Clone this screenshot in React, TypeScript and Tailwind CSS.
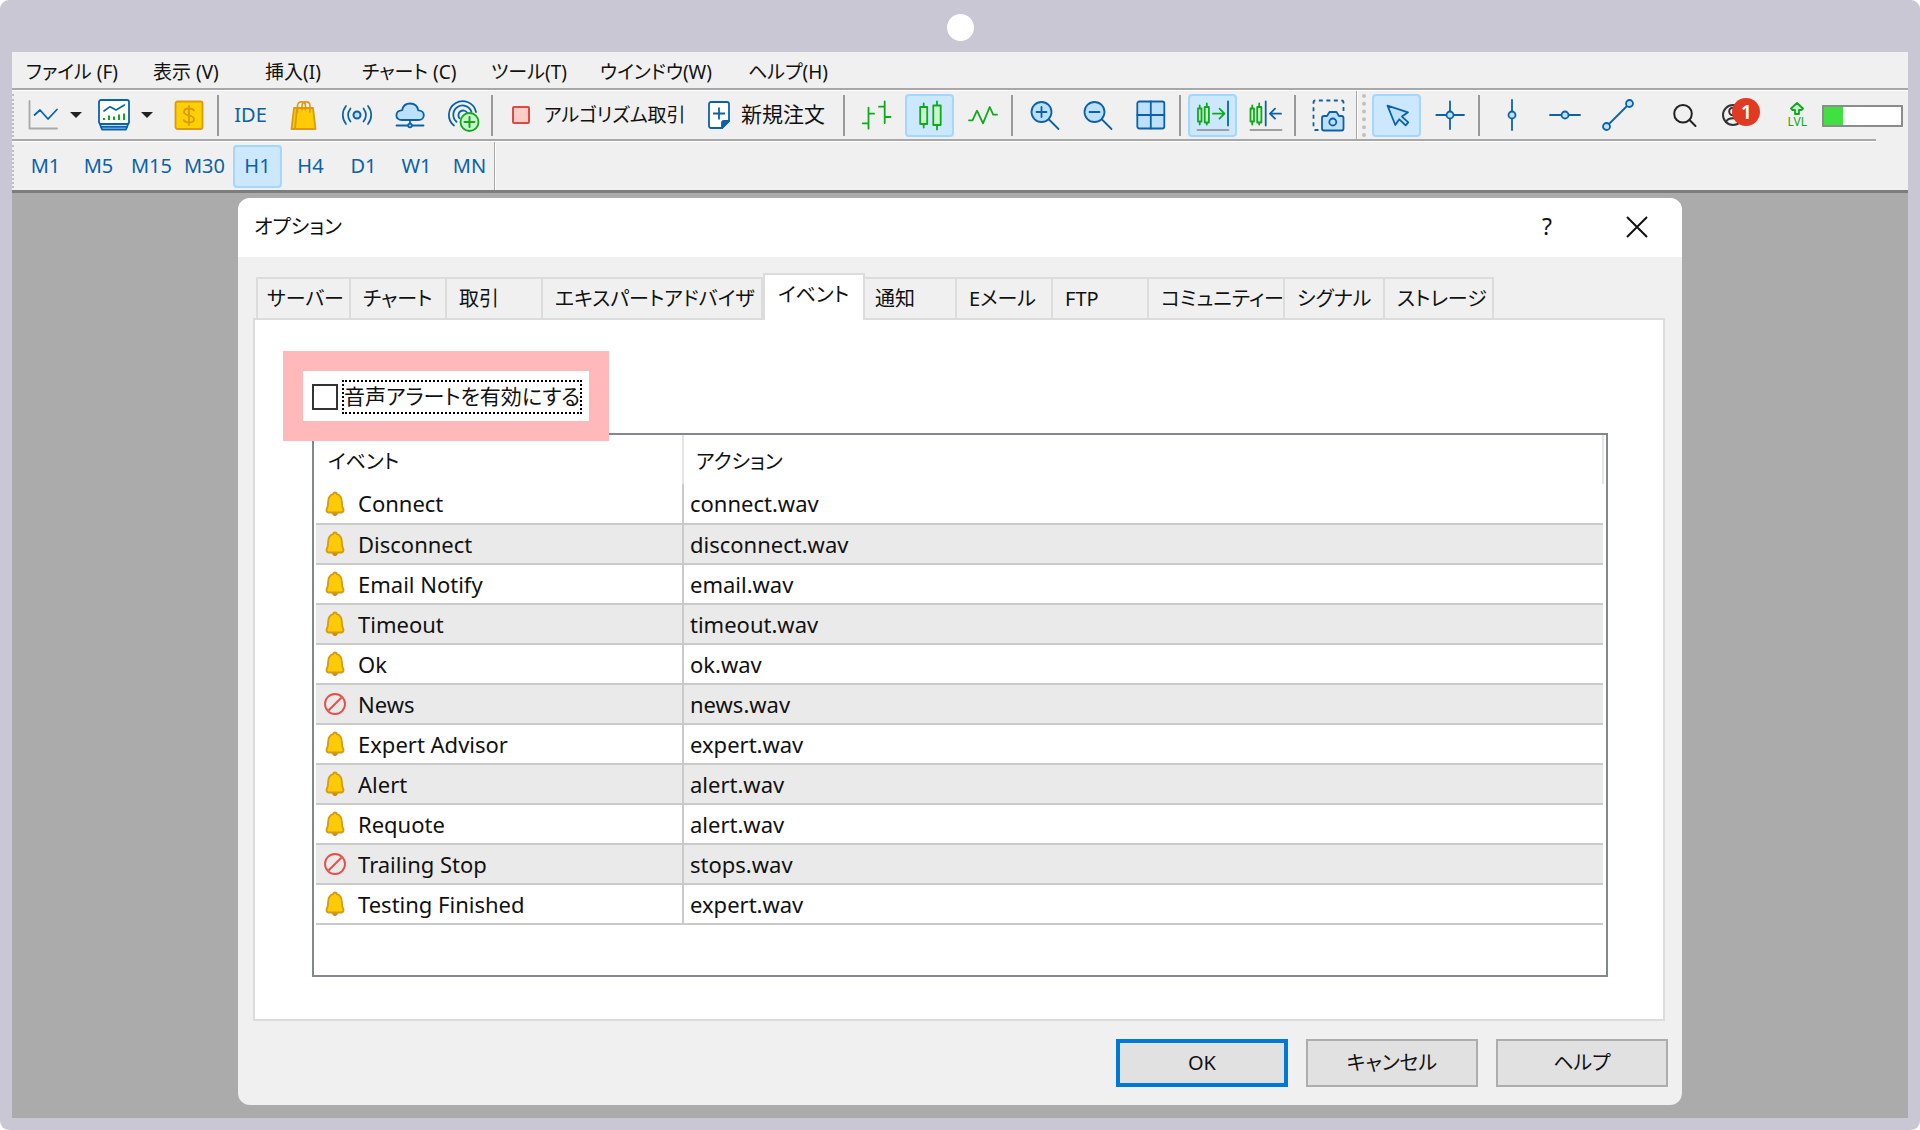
import React from "react";

const BLUE = "#0b62a8";
const SKY = "#bce0fd";
const GREEN = "#12a81c";
const MINT = "#c9f7cd";

function Icon({ children, size = 32 }: { children: React.ReactNode; size?: number }) {
  return (
    <svg
      width={size}
      height={size}
      viewBox="0 0 32 32"
      fill="none"
      stroke={BLUE}
      strokeWidth="1.8"
      strokeLinecap="round"
      strokeLinejoin="round"
      className="shrink-0 overflow-visible"
      aria-hidden="true"
    >
      {children}
    </svg>
  );
}

const LineChartIcon = () => (
  <Icon>
    <path d="M2.5 2v27.5H30" stroke="#a9a9a9" />
    <path d="M7.5 16l5.5-5 8 9 9-9.5" />
  </Icon>
);

const ChartWindowIcon = () => (
  <Icon>
    <path d="M2 25.5l2 5h24l2-5" fill={SKY} />
    <path d="M3 27.8h26" />
    <rect x="1" y="1" width="30" height="24" rx="2" fill="#fff" />
    <path d="M6 12l6-4.3 6 3.3 8.5-5" strokeWidth="1.6" />
    <path d="M6 21v-2M11 21v-4.500M16 21v-3.500M21 21v-5.500M26 21v-6.500" stroke={GREEN} strokeWidth="2" strokeLinecap="butt" />
  </Icon>
);

const DollarIcon = () => (
  <Icon>
    <rect x="2.500" y="2.500" width="27" height="27.500" rx="2" fill="#ffd000" stroke="#da9a12" />
    <path d="M16 7v19M21 11.500c-1-1.600-2.500-2-5-2-3 0-5 1.200-5 3.500 0 4.500 10 2.500 10 7 0 2.300-2 3.500-5 3.500-2.800 0-4.500-.8-5.300-2.500" stroke="#da9a12" />
  </Icon>
);

const BagIcon = () => (
  <Icon>
    <path d="M6 9h19l2.500 21H3.500z" fill="#ffcb05" stroke="#da9a12" />
    <path d="M9 9l-2 21" stroke="#da9a12" />
    <path d="M9.500 13V7c0-5.500 8-5.500 8 0v4M14 11V7c0-5.500 8-5.500 8 0v6" stroke="#da9a12" strokeWidth="1.600" />
  </Icon>
);

const SignalIcon = () => (
  <Icon>
    <circle cx="16" cy="16" r="3.500" fill={SKY} strokeWidth="2" />
    <path d="M9.500 9.500c-3 4-3 9 0 13M22.500 9.500c3 4 3 9 0 13M5 7c-4.300 5.500-4.300 12.500 0 18M27 7c4.300 5.500 4.300 12.500 0 18" strokeWidth="1.700" />
  </Icon>
);

const CloudIcon = () => (
  <Icon>
    <path d="M8 21c-7.500 0-7.500-9 .2-9.800C9 6.500 12.500 4.500 16.200 4.500c4 0 7.300 2.500 8 6.800 7.500.2 7.500 9.700 0 9.700z" fill={SKY} />
    <path d="M16 21v4M2.500 26.500h27" />
    <circle cx="16" cy="26.500" r="1.800" fill={SKY} />
  </Icon>
);

const RadarIcon = () => (
  <Icon>
    <path d="M7 26.500A13.700 13.700 0 1 1 29 13M9.500 22.800A9.300 9.300 0 1 1 24.500 13M12.500 19.200A4.700 4.700 0 1 1 20.500 14.500" />
    <circle cx="22.500" cy="23" r="9" fill={MINT} stroke={GREEN} />
    <path d="M17.500 23h10M22.500 18v10" stroke={GREEN} strokeWidth="2" />
  </Icon>
);

const NewOrderIcon = () => (
  <svg width="22" height="28" viewBox="0 0 22 28" fill="none" stroke={BLUE} strokeWidth="1.800" className="shrink-0" aria-hidden="true">
    <path d="M3 1h16a2 2 0 0 1 2 2v17l-7 7H3a2 2 0 0 1-2-2V3a2 2 0 0 1 2-2z" fill="#fff" />
    <path d="M21 20h-5a2 2 0 0 0-2 2v5z" fill={BLUE} />
    <path d="M5 12.500h12M11 6.500v12" />
  </svg>
);

const BarsIcon = () => (
  <Icon>
    <path d="M7.500 8.700v21M1.700 24.300h5.800M7.500 14.700h5.500M23.700 2.500v21.500M18 7.700h5.700M23.700 18h5.800" stroke={GREEN} />
  </Icon>
);

const CandlesIcon = () => (
  <Icon>
    <path d="M9.700 4.500v24M23 2.500v28" stroke={GREEN} />
    <rect x="6.200" y="8" width="7" height="17" fill={MINT} stroke={GREEN} />
    <rect x="19.300" y="6.500" width="7.400" height="19.500" fill={MINT} stroke={GREEN} />
  </Icon>
);

const ZigzagIcon = () => (
  <Icon>
    <path d="M2 21.300h3.500L10 11.700l6 12.600L22.700 8l3.500 7.700H30" stroke={GREEN} />
  </Icon>
);

const ZoomIcon = ({ plus }: { plus?: boolean }) => (
  <Icon>
    <circle cx="12.500" cy="13" r="10" fill={SKY} />
    <path d={plus ? "M7.500 13h10M12.500 8v10" : "M7.500 13h10"} />
    <path d="M20 20.500l9.500 9.500" />
  </Icon>
);

const GridIcon = () => (
  <Icon>
    <rect x="2.300" y="2.500" width="27" height="27" rx="2" fill={SKY} />
    <path d="M15.800 2.500v27M2.300 16h27" />
  </Icon>
);

const AutoScrollIcon = () => (
  <Icon>
    <path d="M2.700 6.500v19M9.800 4.500v21" stroke={GREEN} />
    <rect x="1" y="9.500" width="3.500" height="13" fill={MINT} stroke={GREEN} />
    <rect x="7.700" y="8" width="4.200" height="15.500" fill={MINT} stroke={GREEN} />
    <path d="M16 14.700h11M22.500 9.700l5 5-5 5" stroke={GREEN} />
    <path d="M31 2.500v24" />
    <path d="M.5 31h31" stroke="#9f9f9f" />
  </Icon>
);

const ChartShiftIcon = () => (
  <Icon>
    <path d="M2.200 6.500v19M9.200 4.500v21" stroke={GREEN} />
    <rect x=".5" y="9.500" width="3.500" height="13" fill={MINT} stroke={GREEN} />
    <rect x="7.200" y="8" width="4.200" height="15.500" fill={MINT} stroke={GREEN} />
    <path d="M31 14.700H20M25 9.700l-5 5 5 5M15.700 2.500v24" />
    <path d="M.5 31h31" stroke="#9f9f9f" />
  </Icon>
);

const CameraIcon = () => (
  <Icon>
    <path d="M6.500 31H3.500a2 2 0 0 1-2-2V3.500a2 2 0 0 1 2-2h26a2 2 0 0 1 2 2V13" strokeDasharray="4 3.500" strokeLinecap="butt" />
    <path d="M12 17h3l2.500-4h7l2.500 4h2.500a2 2 0 0 1 2 2v10.500a2 2 0 0 1-2 2H12a2 2 0 0 1-2-2V19a2 2 0 0 1 2-2z" fill={SKY} />
    <circle cx="20.800" cy="23" r="3.500" />
  </Icon>
);

const CursorIcon = () => (
  <Icon>
    <path d="M6.500 6.700L27 13.300l-6 4.300 6.300 5.700-2.700 3-6.300-6-4 5.700z" fill={SKY} />
  </Icon>
);

const CrosshairIcon = () => (
  <Icon>
    <path d="M16 2.500v27.500M2.300 16H30" />
    <circle cx="16" cy="16" r="3.500" fill={SKY} />
  </Icon>
);

const VerticalLineIcon = () => (
  <Icon>
    <path d="M16 1v30" />
    <circle cx="16" cy="16" r="3.500" fill={SKY} />
  </Icon>
);

const HorizontalLineIcon = () => (
  <Icon>
    <path d="M1 16h30" />
    <circle cx="16" cy="16" r="3.500" fill={SKY} />
  </Icon>
);

const TrendLineIcon = () => (
  <Icon>
    <path d="M4.500 27.500l23-23" />
    <circle cx="4.500" cy="27.500" r="3.500" fill={SKY} />
    <circle cx="27.500" cy="4.500" r="3.500" fill={SKY} />
  </Icon>
);

const SearchIcon = () => (
  <Icon>
    <g stroke="#222" strokeWidth="2">
      <circle cx="15" cy="14.700" r="8.800" />
      <path d="M21.500 21l6 6" />
    </g>
  </Icon>
);

const UserIcon = () => (
  <Icon>
    <g stroke="#333" strokeWidth="2">
      <circle cx="16" cy="16" r="10" />
      <circle cx="16" cy="12.500" r="3.800" />
      <path d="M9 23c2-5 12-5 14 0" />
    </g>
  </Icon>
);

const BellIcon = () => (
  <svg width="20" height="26" viewBox="0 0 20 26" className="shrink-0" aria-hidden="true">
    <path d="M7 21h6c-.3 2.300-1.300 3.500-3 3.500S7.300 23.300 7 21z" fill="#c98a10" stroke="#c98a10" />
    <path
      d="M10 1.500c1 0 1.700.6 1.900 1.600 2.900.9 4.700 3.400 4.900 6.900l.4 5 1.200 3.300c.4 1.700-.3 3.200-1.900 3.200h-13c-1.600 0-2.300-1.500-1.900-3.200L2.800 15l.4-5c.2-3.500 2-6 4.900-6.900.2-1 .9-1.600 1.900-1.600z"
      fill="#fccb03"
      stroke="#d69a12"
      strokeWidth="1.800"
    />
  </svg>
);

const BanIcon = () => (
  <svg width="22" height="24" viewBox="0 0 22 24" fill="none" stroke="#e0524a" strokeWidth="1.900" className="shrink-0" aria-hidden="true">
    <circle cx="11" cy="12" r="10" />
    <path d="M4.500 18.500l13-13" />
  </svg>
);

const Caret = () => (
  <svg width="12" height="6" viewBox="0 0 12 6" className="shrink-0" aria-hidden="true">
    <path d="M0 0h12L6 6z" fill="#222" />
  </svg>
);

const Separator = () => <div className="mr-[3px] h-[41px] w-[2px] shrink-0 bg-[#999999]" />;

const Grip = () => <div className="w-[2px] shrink-0 self-stretch border-l-2 border-dotted border-[#bdbdbd]" />;

function ToolButton({ label, active, children }: { label: string; active?: boolean; children: React.ReactNode }) {
  return (
    <button
      type="button"
      aria-label={label}
      className={
        active
          ? "flex h-[43px] w-[49px] shrink-0 items-center justify-center rounded-[4px] border-2 border-[#a3d7ff] bg-[#cce8ff]"
          : "flex h-[43px] w-[49px] shrink-0 items-center justify-center rounded-[4px]"
      }
    >
      {children}
    </button>
  );
}

const menus = [
  { name: "ファイル (F)", width: "w-[127px]" },
  { name: "表示 (V)", width: "w-[112px]" },
  { name: "挿入(I)", width: "w-[97px]" },
  { name: "チャート (C)", width: "w-[129px]" },
  { name: "ツール(T)", width: "w-[109px]" },
  { name: "ウインドウ(W)", width: "w-[148px]" },
  { name: "ヘルプ(H)", width: "w-[109px]" },
];

const timeframes = ["M1", "M5", "M15", "M30", "H1", "H4", "D1", "W1", "MN"];

const tabs = [
  { name: "サーバー", width: "w-[95px]" },
  { name: "チャート", width: "w-[96px]" },
  { name: "取引", width: "w-[96px]" },
  { name: "エキスパートアドバイザ", width: "w-[220px]" },
  { name: "イベント", width: "w-[102px]", active: true },
  { name: "通知", width: "w-[92px]", first: true },
  { name: "Eメール", width: "w-[96px]" },
  { name: "FTP", width: "w-[96px]" },
  { name: "コミュニティー", width: "w-[136px]" },
  { name: "シグナル", width: "w-[100px]" },
  { name: "ストレージ", width: "w-[109px]" },
];

const events = [
  { name: "Connect", file: "connect.wav", on: true },
  { name: "Disconnect", file: "disconnect.wav", on: true },
  { name: "Email Notify", file: "email.wav", on: true },
  { name: "Timeout", file: "timeout.wav", on: true },
  { name: "Ok", file: "ok.wav", on: true },
  { name: "News", file: "news.wav", on: false },
  { name: "Expert Advisor", file: "expert.wav", on: true },
  { name: "Alert", file: "alert.wav", on: true },
  { name: "Requote", file: "alert.wav", on: true },
  { name: "Trailing Stop", file: "stops.wav", on: false },
  { name: "Testing Finished", file: "expert.wav", on: true },
];

function MenuBar() {
  return (
    <nav className="flex h-9 items-center pt-1 pl-[14px] text-[19px]">
      {menus.map((m) => (
        <button key={m.name} type="button" className={"text-left whitespace-nowrap " + m.width}>
          {m.name}
        </button>
      ))}
    </nav>
  );
}

function Toolbar() {
  return (
    <div className="flex h-[51px] border-t-2 border-[#a8a8a8]">
      <div className="flex grow items-center gap-1 border-t border-white">
        <div className="flex h-[43px] shrink-0">
          <Grip />
        </div>
        <button type="button" aria-label="Chart type" className="ml-[2px] flex h-[43px] w-[67px] shrink-0 items-center gap-[11px] pl-[7px]">
          <LineChartIcon />
          <Caret />
        </button>
        <button type="button" aria-label="Chart template" className="flex h-[43px] w-[69px] shrink-0 items-center gap-[11px] pl-[7px]">
          <ChartWindowIcon />
          <Caret />
        </button>
        <ToolButton label="Market watch"><DollarIcon /></ToolButton>
        <Separator />
        <ToolButton label="IDE">
          <span className="text-[20px] text-[#0b62a8]">IDE</span>
        </ToolButton>
        <ToolButton label="Market"><BagIcon /></ToolButton>
        <ToolButton label="Signals"><SignalIcon /></ToolButton>
        <ToolButton label="VPS"><CloudIcon /></ToolButton>
        <ToolButton label="Add service"><RadarIcon /></ToolButton>
        <Separator />
        <button type="button" className="flex h-[43px] w-[196px] shrink-0 items-center gap-[14px] pl-3 text-[19px] whitespace-nowrap">
          <span className="size-[18px] shrink-0 rounded-[2px] border-2 border-[#dc4a43] bg-[#ffcdc6]" />
          アルゴリズム取引
        </button>
        <button type="button" className="flex h-[43px] w-[139px] shrink-0 items-center gap-[11px] pl-2 text-[21px] whitespace-nowrap">
          <NewOrderIcon />
          新規注文
        </button>
        <Separator />
        <ToolButton label="Bars"><BarsIcon /></ToolButton>
        <ToolButton label="Candles" active><CandlesIcon /></ToolButton>
        <ToolButton label="Line"><ZigzagIcon /></ToolButton>
        <Separator />
        <ToolButton label="Zoom in"><ZoomIcon plus /></ToolButton>
        <ToolButton label="Zoom out"><ZoomIcon /></ToolButton>
        <ToolButton label="Tile windows"><GridIcon /></ToolButton>
        <Separator />
        <ToolButton label="Auto scroll" active><AutoScrollIcon /></ToolButton>
        <ToolButton label="Chart shift"><ChartShiftIcon /></ToolButton>
        <Separator />
        <ToolButton label="Screenshot"><CameraIcon /></ToolButton>
        <div className="w-[2px] shrink-0 self-stretch border-r border-white bg-[#a8a8a8]" />
        <div className="mr-[2px] h-[43px] w-[4px] shrink-0 border-l-4 border-dotted border-[#c0c0c0]" />
        <ToolButton label="Cursor" active><CursorIcon /></ToolButton>
        <ToolButton label="Crosshair"><CrosshairIcon /></ToolButton>
        <Separator />
        <ToolButton label="Vertical line"><VerticalLineIcon /></ToolButton>
        <ToolButton label="Horizontal line"><HorizontalLineIcon /></ToolButton>
        <ToolButton label="Trend line"><TrendLineIcon /></ToolButton>
        <div className="ml-auto flex items-center pr-[5px]">
          <button type="button" aria-label="Search" className="mr-[17px]">
            <SearchIcon />
          </button>
          <button type="button" aria-label="Account" className="relative mr-[38px]">
            <UserIcon />
            <span className="absolute -top-[1px] left-[15px] flex size-[28px] items-center justify-center rounded-full bg-[#e23a22] text-[20px] font-semibold text-white">
              1
            </span>
          </button>
          <div className="mr-[15px] flex flex-col items-center text-[#12a81c]">
            <svg width="14" height="13" viewBox="0 0 14 13" fill={MINT} stroke={GREEN} strokeWidth="1.800" strokeLinejoin="round" aria-hidden="true">
              <path d="M7 1l6 5.500L11.500 8H9v4H5V8H2.500L1 6.500z" />
            </svg>
            <span className="text-[12px] leading-[14px]">LVL</span>
          </div>
          <div className="mt-[2px] h-[22px] w-[81px] border-2 border-[#8c8c8c] bg-white">
            <div className="h-full w-1/4 bg-[#41e041]" />
          </div>
        </div>
      </div>
    </div>
  );
}

function TimeframeBar() {
  return (
    <div className="flex h-[51px] flex-col">
      <div className="mr-8 h-[3px] border-t-2 border-b border-t-[#a8a8a8] border-b-white" />
      <div className="flex grow items-center">
        <div className="flex h-[43px] shrink-0">
          <Grip />
        </div>
        <div className="ml-[7px] flex gap-1">
          {timeframes.map((t) => (
            <button
              key={t}
              type="button"
              className={
                t === "H1"
                  ? "flex h-[43px] w-[49px] items-center justify-center rounded-[4px] border-2 border-[#a3d7ff] bg-[#cce8ff] text-[20px] text-[#0b62a8]"
                  : "flex h-[43px] w-[49px] items-center justify-center text-[20px] text-[#0b62a8]"
              }
            >
              {t}
            </button>
          ))}
        </div>
        <div className="w-[2px] self-stretch border-r border-white bg-[#a8a8a8]" />
      </div>
    </div>
  );
}

function EventTable() {
  return (
    <div className="mt-[19px] border-2 border-[#828790] px-[2px] pb-[50px]">
      <table className="w-full table-fixed border-collapse text-left text-[22px]">
        <colgroup>
          <col className="w-[367px]" />
          <col />
        </colgroup>
        <thead>
          <tr className="h-[49px] text-[20px]">
            <th scope="col" className="border-r-2 border-[#e5e5e5] pt-1 pl-3 font-normal">
              イベント
            </th>
            <th scope="col" className="border-r-2 border-[#e5e5e5] pt-1 pl-3 font-normal">
              アクション
            </th>
          </tr>
        </thead>
        <tbody>
          {events.map((e) => (
            <tr key={e.name} className="h-10 border-b-2 border-[#cacaca] even:bg-[#eaeaea]">
              <td className="border-r-2 border-[#cacaca] p-0">
                <div className="flex h-[38px] items-center">
                  <span className="flex w-[38px] shrink-0 justify-center">{e.on ? <BellIcon /> : <BanIcon />}</span>
                  <span className="pl-1">{e.name}</span>
                </div>
              </td>
              <td className="py-0 pl-[6px]">{e.file}</td>
            </tr>
          ))}
        </tbody>
      </table>
    </div>
  );
}

function OptionsDialog() {
  return (
    <section role="dialog" aria-label="オプション" className="mx-[226px] mt-[5px] mb-3 flex flex-col overflow-hidden rounded-[12px] bg-[#f0f0f0]">
      <header className="flex h-[59px] items-center bg-white pb-[2px] pl-4">
        <h1 className="grow text-[20px]">オプション</h1>
        <button type="button" aria-label="Help" className="w-[90px] text-[23px]">
          ?
        </button>
        <button type="button" aria-label="Close" className="flex w-[90px] justify-center">
          <svg width="22" height="22" viewBox="0 0 22 22" stroke="#111" strokeWidth="2" aria-hidden="true">
            <path d="M1 1l20 20M21 1L1 21" />
          </svg>
        </button>
      </header>

      <div className="pt-4 pr-[17px] pl-[15px]">
        <div role="tablist" className="relative z-10 -mb-[2px] flex items-end pl-[3px] text-[20px]">
          {tabs.map((t) => (
            <button
              key={t.name}
              type="button"
              role="tab"
              aria-selected={!!t.active}
              className={
                (t.active
                  ? "h-[47px] border-2 border-b-0 border-[#dcdcdc] bg-white pb-[6px] pl-[13px] "
                  : t.first
                    ? "h-[43px] border-y-2 border-r-2 border-[#dcdcdc] pl-[10px] "
                    : "h-[43px] border-y-2 border-r-2 border-[#dcdcdc] pl-3 first:border-l-2 first:pl-[9px] ") +
                "shrink-0 text-left whitespace-nowrap " +
                t.width
              }
            >
              {t.name}
            </button>
          ))}
        </div>
        <div role="tabpanel" className="border-2 border-[#dcdcdc] bg-white pt-[60px] pr-[55px] pb-[42px] pl-[57px]">
          <div className="relative z-10 flex w-fit items-center gap-1">
            <div className="pointer-events-none absolute -top-[29px] -right-[27px] -bottom-[27px] -left-[29px] border-[20px] border-[#ffb9ba]" />
            <input
              id="sound-alerts"
              type="checkbox"
              className="size-[26px] appearance-none border-2 border-[#333333] bg-white checked:bg-[#0078d7]"
            />
            <label
              htmlFor="sound-alerts"
              className="flex h-[34px] w-[240px] items-center justify-center border-2 border-dotted border-black text-[21px] whitespace-nowrap"
            >
              音声アラートを有効にする
            </label>
          </div>
          <EventTable />
        </div>
      </div>

      <footer className="flex justify-end gap-[18px] pt-[18px] pr-[14px] pb-[18px] text-[20px]">
        <button type="button" className="h-12 w-[172px] border-4 border-[#0078d7] bg-[#e1e1e1]">
          OK
        </button>
        <button type="button" className="h-12 w-[172px] border-2 border-[#adadad] bg-[#e1e1e1]">
          キャンセル
        </button>
        <button type="button" className="h-12 w-[172px] border-2 border-[#adadad] bg-[#e1e1e1]">
          ヘルプ
        </button>
      </footer>
    </section>
  );
}

export default function App() {
  return (
    <div className="min-h-screen bg-white font-['Noto_Sans','Noto_Sans_CJK_JP',sans-serif] text-[#111] [font-feature-settings:'palt']">
      <div className="flex min-h-screen flex-col rounded-[9px] bg-[#c8c7d3] px-3 pb-3">
        <div className="flex h-[52px] items-center justify-center pt-[2px]">
          <div className="size-[27px] rounded-full bg-white" />
        </div>
        <main className="flex grow flex-col bg-[#ababab]">
          <div className="border-b-[3px] border-[#7d7d7d] bg-[#f0f0f0]">
            <MenuBar />
            <Toolbar />
            <TimeframeBar />
          </div>
          <OptionsDialog />
        </main>
      </div>
    </div>
  );
}
